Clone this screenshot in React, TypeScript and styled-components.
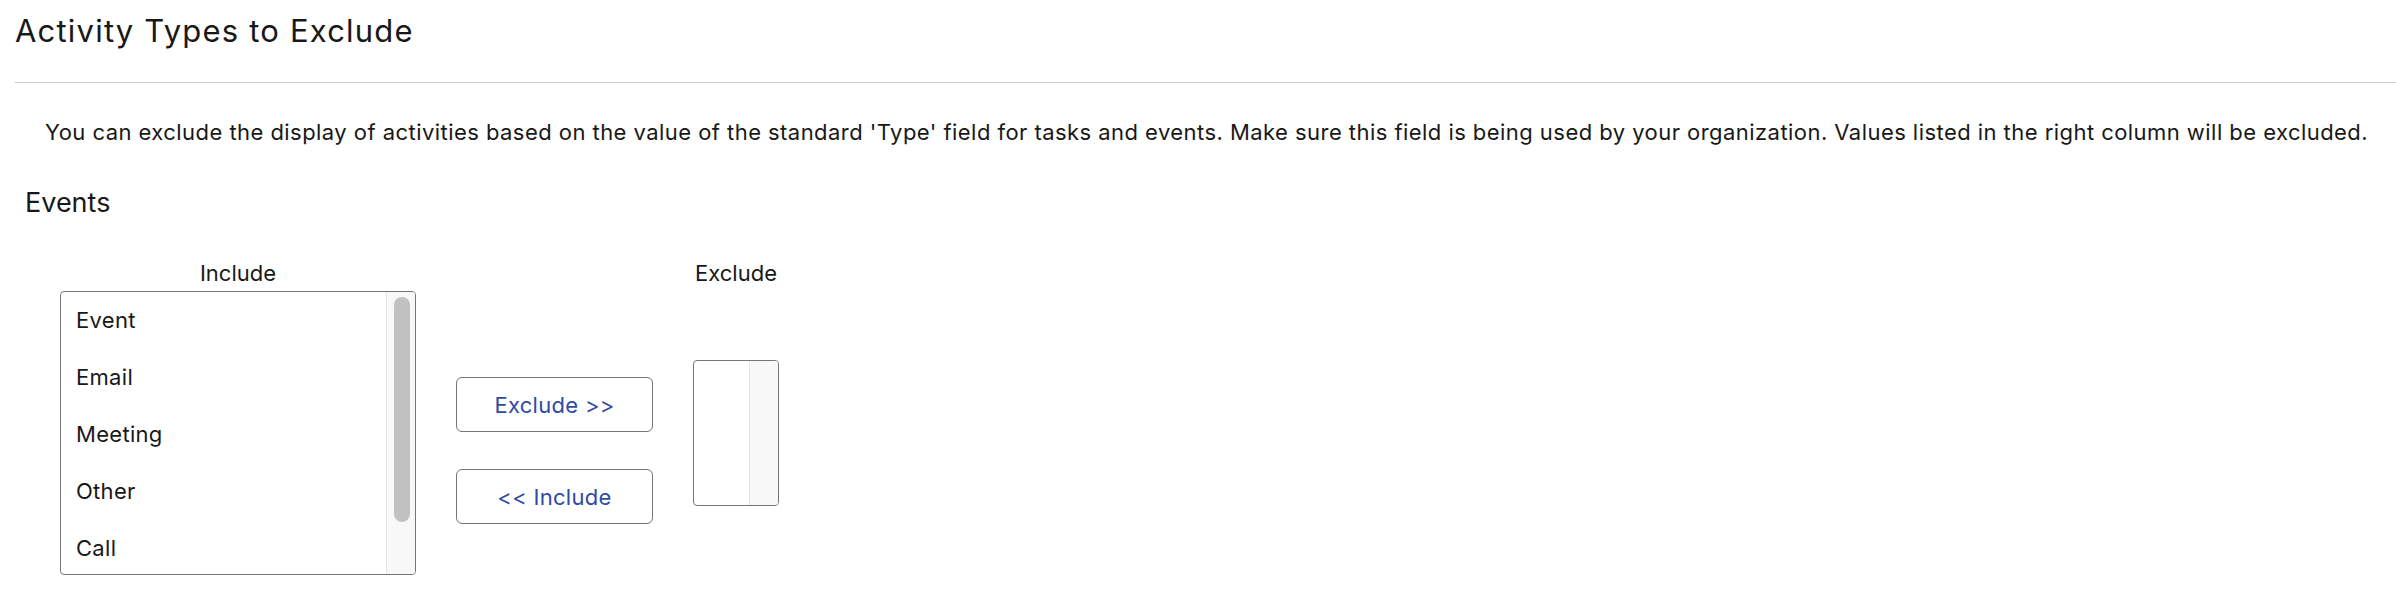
import React from "react";
import styled, { createGlobalStyle } from "styled-components";

const GlobalStyle = createGlobalStyle`
  body {
    margin: 0;
    background: #ffffff;
    font-family: Inter, "Noto Sans", sans-serif;
    color: #181818;
  }
`;

const Page = styled.div`
  padding: 13px 0 0 15px;
`;

const Header = styled.div`
  padding-bottom: 33px;
  border-bottom: 1px solid #c9c9c9;
`;

const Title = styled.h1`
  margin: 0;
  font-size: 31px;
  font-weight: 400;
  line-height: 36px;
  letter-spacing: 1.2px;
`;

const Description = styled.p`
  margin: 36px 0 0;
  padding-left: 30px;
  font-size: 22px;
  line-height: 27px;
  letter-spacing: 0.45px;
`;

const SectionTitle = styled.h2`
  margin: 40px 0 0;
  padding-left: 10px;
  font-size: 27px;
  font-weight: 400;
  line-height: 33px;
`;

const Picker = styled.div`
  display: grid;
  grid-template-columns: 356px 197px 86px;
  column-gap: 40px;
  row-gap: 4px;
  align-items: center;
  margin: 41px 0 0 45px;
`;

const ColumnLabel = styled.div<{ $col: number }>`
  grid-column: ${(p) => p.$col};
  justify-self: center;
  font-size: 22px;
  line-height: 27px;
`;

const ListBox = styled.div<{ $w: number; $h: number }>`
  display: flex;
  width: ${(p) => p.$w}px;
  height: ${(p) => p.$h}px;
  box-sizing: border-box;
  border: 1px solid #767676;
  border-radius: 4px;
  overflow: hidden;
  background: #ffffff;
`;

const Options = styled.ul`
  flex: 1;
  margin: 0;
  padding: 0;
  list-style: none;
  overflow: hidden;
`;

const Option = styled.li`
  padding-left: 15px;
  font-size: 22px;
  line-height: 57px;
  letter-spacing: 0.3px;
  white-space: nowrap;
`;

const ScrollTrack = styled.div`
  width: 28px;
  border-left: 1px solid #e4e4e4;
  background: #f8f8f8;
`;

const ScrollThumb = styled.div`
  width: 16px;
  height: 225px;
  margin: 5px 0 0 7px;
  border-radius: 8px;
  background: #c1c1c1;
`;

const ButtonColumn = styled.div`
  display: flex;
  flex-direction: column;
  gap: 37px;
  margin-top: 35px;
`;

const MoveButton = styled.button`
  height: 55px;
  box-sizing: border-box;
  border: 1px solid #747474;
  border-radius: 6px;
  background: #ffffff;
  color: #2f4aa5;
  font-family: inherit;
  font-size: 22px;
  letter-spacing: 0.3px;
  cursor: pointer;
`;

const included = ["Event", "Email", "Meeting", "Other", "Call"];

export default function App() {
  return (
    <>
      <GlobalStyle />
      <Page>
        <Header>
          <Title>Activity Types to Exclude</Title>
        </Header>
        <Description>
          You can exclude the display of activities based on the value of the
          standard 'Type' field for tasks and events. Make sure this field is
          being used by your organization. Values listed in the right column
          will be excluded.
        </Description>
        <SectionTitle>Events</SectionTitle>
        <Picker>
          <ColumnLabel $col={1}>Include</ColumnLabel>
          <ColumnLabel $col={3}>Exclude</ColumnLabel>
          <ListBox $w={356} $h={284}>
            <Options>
              {included.map((item) => (
                <Option key={item}>{item}</Option>
              ))}
            </Options>
            <ScrollTrack>
              <ScrollThumb />
            </ScrollTrack>
          </ListBox>
          <ButtonColumn>
            <MoveButton>Exclude &gt;&gt;</MoveButton>
            <MoveButton>&lt;&lt; Include</MoveButton>
          </ButtonColumn>
          <ListBox $w={86} $h={146}>
            <Options />
            <ScrollTrack />
          </ListBox>
        </Picker>
      </Page>
    </>
  );
}
